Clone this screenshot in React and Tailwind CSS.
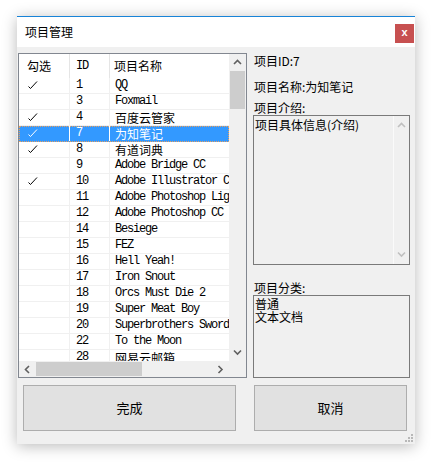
import React from "react";

const rows = [
  { id: "1", name: "QQ", checked: true },
  { id: "3", name: "Foxmail" },
  { id: "4", name: "百度云管家", checked: true, cjk: true },
  { id: "7", name: "为知笔记", checked: true, cjk: true, selected: true },
  { id: "8", name: "有道词典", checked: true, cjk: true },
  { id: "9", name: "Adobe Bridge CC" },
  { id: "10", name: "Adobe Illustrator CC", checked: true },
  { id: "11", name: "Adobe Photoshop Lightroom" },
  { id: "12", name: "Adobe Photoshop CC" },
  { id: "14", name: "Besiege" },
  { id: "15", name: "FEZ" },
  { id: "16", name: "Hell Yeah!" },
  { id: "17", name: "Iron Snout" },
  { id: "18", name: "Orcs Must Die 2" },
  { id: "19", name: "Super Meat Boy" },
  { id: "20", name: "Superbrothers Sword & Sworcery" },
  { id: "22", name: "To the Moon" },
  { id: "28", name: "网易云邮箱", cjk: true },
];

const cjk = "font-['Noto_Sans_CJK_SC',sans-serif]";
const mono = "font-['Liberation_Mono','Noto_Sans_CJK_SC',monospace] text-[12px] tracking-[-1.2px]";

function Check({ white }) {
  return (
    <svg width="10" height="9" viewBox="0 0 10 9">
      <polyline
        points="0.5,5.5 2.5,7.5 9,0.5"
        fill="none"
        stroke={white ? "#fff" : "#000"}
        strokeWidth="1"
      />
    </svg>
  );
}

function Chevron({ dir, color = "#606060" }) {
  const pts = {
    up: "1,6 4.5,2.5 8,6",
    down: "1,2.5 4.5,6 8,2.5",
    left: "6,1 2.5,4.5 6,8",
    right: "2.5,1 6,4.5 2.5,8",
  }[dir];
  return (
    <svg width="9" height="9" viewBox="0 0 9 9">
      <polyline points={pts} fill="none" stroke={color} strokeWidth="1.6" />
    </svg>
  );
}

function ListBox() {
  return (
    <div className="w-[229px] h-full border border-[#828790] bg-white flex flex-col">
      <div className="flex h-[307px]">
        <div className="w-[210px] overflow-hidden">
          {/* header */}
          <div className="h-[24px] flex text-[12px] leading-[24px]">
            <div className={`w-[51px] pl-[8px] border-r border-[#e5e5e5] ${cjk}`}>勾选</div>
            <div className={`w-[40px] pl-[6px] border-r border-[#e5e5e5] ${mono}`}>ID</div>
            <div className={`w-[119px] pl-[4px] whitespace-nowrap ${cjk}`}>项目名称</div>
          </div>
          {rows.map((r) => (
            <div
              key={r.id}
              className={`h-[16px] flex text-[12px] leading-[15px] border-b overflow-hidden ${
                r.selected
                  ? "bg-[#3399ff] text-white border-[#3399ff] outline-1 outline-dotted outline-[#e8a060] -outline-offset-1"
                  : "border-[#f0f0f0]"
              }`}
            >
              <div className={`w-[51px] pl-[9px] flex items-center border-r ${r.selected ? "border-r-white" : "border-r-[#f0f0f0]"}`}>
                {r.checked && <Check white={r.selected} />}
              </div>
              <div className={`w-[40px] pl-[6px] border-r ${r.selected ? "border-r-white" : "border-r-[#f0f0f0]"} ${mono}`}>
                {r.id}
              </div>
              <div className={`w-[119px] pl-[5px] whitespace-nowrap overflow-hidden ${r.cjk ? cjk : mono}`}>
                {r.name}
              </div>
            </div>
          ))}
        </div>
        {/* vertical scrollbar */}
        <div className="w-[17px] bg-[#f0f0f0] flex flex-col">
          <div className="h-[17px] flex items-center justify-center">
            <Chevron dir="up" />
          </div>
          <div className="flex-1 px-[1px]">
            <div className="h-[38px] bg-[#cdcdcd]" />
          </div>
          <div className="h-[17px] flex items-center justify-center">
            <Chevron dir="down" />
          </div>
        </div>
      </div>
      {/* horizontal scrollbar */}
      <div className="h-[16px] flex">
        <div className="w-[210px] bg-[#f0f0f0] flex items-center">
          <div className="w-[17px] h-full flex items-center justify-center">
            <Chevron dir="left" />
          </div>
          <div className="flex-1 h-full py-[1px]">
            <div className="w-[106px] h-full bg-[#cdcdcd]" />
          </div>
          <div className="w-[17px] h-full flex items-center justify-center">
            <Chevron dir="right" />
          </div>
        </div>
        <div className="w-[17px] bg-[#f0f0f0]" />
      </div>
    </div>
  );
}

function DetailPanel() {
  return (
    <div className={`w-[157px] flex flex-col text-[12px] text-black ${cjk}`}>
      <div className="h-[16px] leading-[16px] pl-[1px]">项目ID:7</div>
      <div className="h-[16px] leading-[16px] mt-[10px] pl-[1px]">项目名称:为知笔记</div>
      <div className="h-[14px] leading-[14px] mt-[6px] pl-[1px]">项目介绍:</div>
      <div className="h-[150px] border border-[#7a7a7a] bg-[#f0f0f0] flex">
        <div className="flex-1 pl-[1px] pt-[1px] leading-[16px]">项目具体信息(介绍)</div>
        <div className="w-[16px] border-l border-[#fafafa] flex flex-col items-center justify-between py-[5px]">
          <Chevron dir="up" color="#c0c0c0" />
          <Chevron dir="down" color="#c0c0c0" />
        </div>
      </div>
      <div className="h-[14px] leading-[14px] mt-[16px] pl-[1px]">项目分类:</div>
      <div className="h-[83px] border border-[#7a7a7a] bg-[#f0f0f0] pl-[1px] pt-[1px] leading-[13px]">
        <div>普通</div>
        <div>文本文档</div>
      </div>
    </div>
  );
}

export default function App() {
  return (
    <div className="w-[433px] h-[467px] bg-white pl-[17px] pt-[16px]">
      <div className="w-[398px] h-[428px] border-t border-[#1883d7] bg-[#f0f0f0] shadow-[0_2px_14px_rgba(0,0,0,0.28)] flex flex-col relative">
        {/* title bar */}
        <div className="h-[30px] bg-white flex justify-between shrink-0">
          <div className={`pl-[8px] text-[12px] leading-[30px] text-black ${cjk}`}>项目管理</div>
          <div className="mt-[7px] mr-[1px] w-[19px] h-[19px] bg-[#c75050] flex items-center justify-center text-white text-[11px] font-bold font-['Liberation_Sans',sans-serif] leading-none pb-[2px]">
            x
          </div>
        </div>

        {/* body */}
        <div className="pt-[6px] pl-[1px] flex flex-col">
          <div className="flex gap-[6px] h-[325px]">
            <ListBox />
            <DetailPanel />
          </div>
          <div className="flex gap-[18px] mt-[7px] ml-[5px]">
            <button className={`w-[213px] h-[46px] bg-[#e1e1e1] border border-[#adadad] text-[13px] text-black ${cjk}`}>
              完成
            </button>
            <button className={`w-[153px] h-[46px] bg-[#e1e1e1] border border-[#adadad] text-[13px] text-black ${cjk}`}>
              取消
            </button>
          </div>
        </div>

        {/* resize grip */}
        <svg className="absolute right-[2px] bottom-[2px]" width="8" height="8" viewBox="0 0 8 8">
          <rect x="6" y="0" width="2" height="2" fill="#b8b8b8" />
          <rect x="3" y="3" width="2" height="2" fill="#b8b8b8" />
          <rect x="6" y="3" width="2" height="2" fill="#b8b8b8" />
          <rect x="0" y="6" width="2" height="2" fill="#b8b8b8" />
          <rect x="3" y="6" width="2" height="2" fill="#b8b8b8" />
          <rect x="6" y="6" width="2" height="2" fill="#b8b8b8" />
        </svg>
      </div>
    </div>
  );
}
